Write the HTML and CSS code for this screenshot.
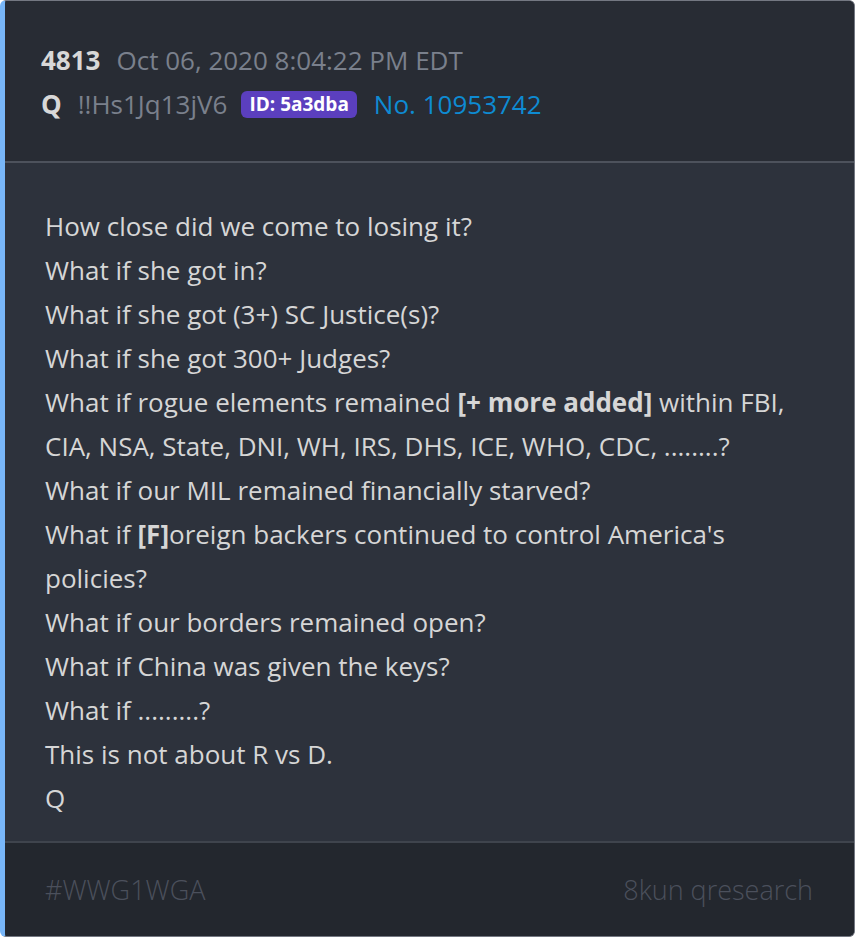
FILE: index.html
```html
<!DOCTYPE html>
<html lang="en">
<head>
    <meta charset="UTF-8">
    <meta name="viewport" content="width=device-width, initial-scale=1.0">
    <title>Post 4813</title>
    <link rel="stylesheet" href="styles.css">
</head>
<body>
    <div class="post-card">
        <div class="post-header">
            <div class="header-row">
                <span class="post-num">4813</span>
                <span class="post-date">Oct 06, 2020 8:04:22 PM EDT</span>
            </div>
            <div class="header-row">
                <span class="post-author">Q</span>
                <span class="tripcode">!!Hs1Jq13jV6</span>
                <span class="id-badge">ID: 5a3dba</span>
                <a class="post-link" href="#">No. 10953742</a>
            </div>
        </div>

        <div class="post-body">
            <p>How close did we come to losing it?</p>
            <p>What if she got in?</p>
            <p>What if she got (3+) SC Justice(s)?</p>
            <p>What if she got 300+ Judges?</p>
            <p>What if rogue elements remained <strong>[+ more added]</strong> within FBI, CIA, NSA, State, DNI, WH, IRS, DHS, ICE, WHO, CDC, ........?</p>
            <p>What if our MIL remained financially starved?</p>
            <p>What if <strong>[F]</strong>oreign backers continued to control America's policies?</p>
            <p>What if our borders remained open?</p>
            <p>What if China was given the keys?</p>
            <p>What if .........?</p>
            <p>This is not about R vs D.</p>
            <p>Q</p>
        </div>

        <div class="post-footer">
            <span>#WWG1WGA</span>
            <span>8kun qresearch</span>
        </div>
    </div>
</body>
</html>
```

FILE: styles.css
```css
* {
    margin: 0;
    padding: 0;
    box-sizing: border-box;
}

body {
    font-family: "Open Sans", "Liberation Sans", sans-serif;
    background: #ffffff;
    width: 856px;
    height: 938px;
}

.post-card {
    width: 855px;
    height: 937px;
    border: 1px solid #747882;
    border-left: 5px solid #78b6f8;
    border-radius: 6px;
    overflow: hidden;
    display: flex;
    flex-direction: column;
    background: #2d323c;
}

.post-header {
    background: #282c34;
    padding: 37px 36px 35px 36px;
    border-bottom: 2px solid #4d525c;
}

.header-row {
    display: flex;
    align-items: center;
    height: 44px;
    font-size: 26px;
}

.post-num,
.post-author {
    font-weight: 700;
    color: #d8d8d8;
    margin-right: 16px;
}

.post-date,
.tripcode {
    color: #7a808c;
}

.tripcode {
    margin-right: 14px;
}

.id-badge {
    background: #5b3fbe;
    color: #ffffff;
    font-weight: 700;
    font-size: 19px;
    line-height: 27px;
    padding: 0 8px;
    border-radius: 6px;
    margin-right: 17px;
}

.post-link {
    color: #0e8bd2;
    text-decoration: none;
}

.post-body {
    flex: 1;
    padding: 41px 40px 0 40px;
    color: #d6d6d6;
    font-size: 26px;
    line-height: 44px;
}

.post-body strong {
    font-weight: 700;
}

.post-footer {
    background: #23272e;
    border-top: 2px solid #3f444d;
    height: 95px;
    padding: 0 41px 0 40px;
    display: flex;
    align-items: center;
    justify-content: space-between;
    font-size: 27px;
    font-weight: 300;
    color: #4b505c;
}
```
